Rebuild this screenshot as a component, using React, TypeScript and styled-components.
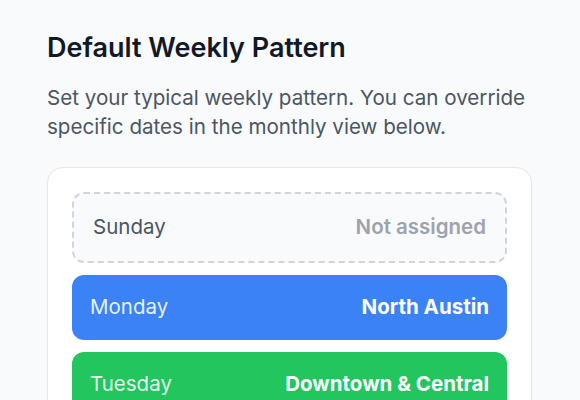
import React from "react";
import styled, { createGlobalStyle } from "styled-components";

const GlobalStyle = createGlobalStyle`
  html, body {
    margin: 0;
    padding: 0;
    background: #f9fafb;
    font-family: Inter, "Noto Sans", "Liberation Sans", sans-serif;
    -webkit-font-smoothing: antialiased;
  }
  * { box-sizing: border-box; }
`;

const Page = styled.div`
  padding: 32px 48px 32px 47px;
`;

const Section = styled.section`
  width: 485px;
  display: flex;
  flex-direction: column;
`;

const Title = styled.h2`
  margin: 0;
  font-size: 27px;
  line-height: 32px;
  font-weight: 600;
  color: #111827;
`;

const Subtitle = styled.p`
  margin: 19px 0 25px;
  font-size: 20.6px;
  line-height: 29.25px;
  color: #4b5563;
`;

const Card = styled.div`
  background: #ffffff;
  border: 1px solid #e5e7eb;
  border-radius: 16px;
  box-shadow: 0 1px 2px rgba(0, 0, 0, 0.04);
  padding: 24px;
  display: flex;
  flex-direction: column;
  gap: 12px;
`;

type Tone = "empty" | "blue" | "green" | "purple" | "orange";

const tones: Record<Tone, { bg: string; day: string; area: string }> = {
  empty: { bg: "#f9fafb", day: "#4b5563", area: "#9ca3af" },
  blue: { bg: "#3b82f6", day: "rgba(255,255,255,0.9)", area: "#ffffff" },
  green: { bg: "#22c55e", day: "rgba(255,255,255,0.9)", area: "#ffffff" },
  purple: { bg: "#a855f7", day: "rgba(255,255,255,0.9)", area: "#ffffff" },
  orange: { bg: "#f97316", day: "rgba(255,255,255,0.9)", area: "#ffffff" },
};

const DayRow = styled.div<{ $tone: Tone }>`
  display: flex;
  align-items: center;
  justify-content: space-between;
  border-radius: 12px;
  font-size: 20.5px;
  line-height: 28px;
  background: ${(p) => tones[p.$tone].bg};
  ${(p) =>
    p.$tone === "empty"
      ? `border: 2px dashed #d1d5db; padding: 19.5px 19px;`
      : `padding: 18.5px 18px;`}
`;

const DayName = styled.span<{ $tone: Tone }>`
  color: ${(p) => tones[p.$tone].day};
  font-weight: 400;
`;

const AreaName = styled.span<{ $tone: Tone }>`
  color: ${(p) => tones[p.$tone].area};
  font-weight: ${(p) => (p.$tone === "empty" ? 600 : 700)};
`;

const week: { day: string; area: string; tone: Tone }[] = [
  { day: "Sunday", area: "Not assigned", tone: "empty" },
  { day: "Monday", area: "North Austin", tone: "blue" },
  { day: "Tuesday", area: "Downtown & Central", tone: "green" },
  { day: "Wednesday", area: "South Austin", tone: "purple" },
  { day: "Thursday", area: "East Austin", tone: "orange" },
  { day: "Friday", area: "North Austin", tone: "blue" },
  { day: "Saturday", area: "Not assigned", tone: "empty" },
];

export default function App() {
  return (
    <React.Fragment>
      <GlobalStyle />
      <Page>
        <Section>
          <Title>Default Weekly Pattern</Title>
          <Subtitle>
            Set your typical weekly pattern. You can override specific dates in
            the monthly view below.
          </Subtitle>
          <Card>
            {week.map((d) => (
              <DayRow key={d.day} $tone={d.tone}>
                <DayName $tone={d.tone}>{d.day}</DayName>
                <AreaName $tone={d.tone}>{d.area}</AreaName>
              </DayRow>
            ))}
          </Card>
        </Section>
      </Page>
    </React.Fragment>
  );
}
